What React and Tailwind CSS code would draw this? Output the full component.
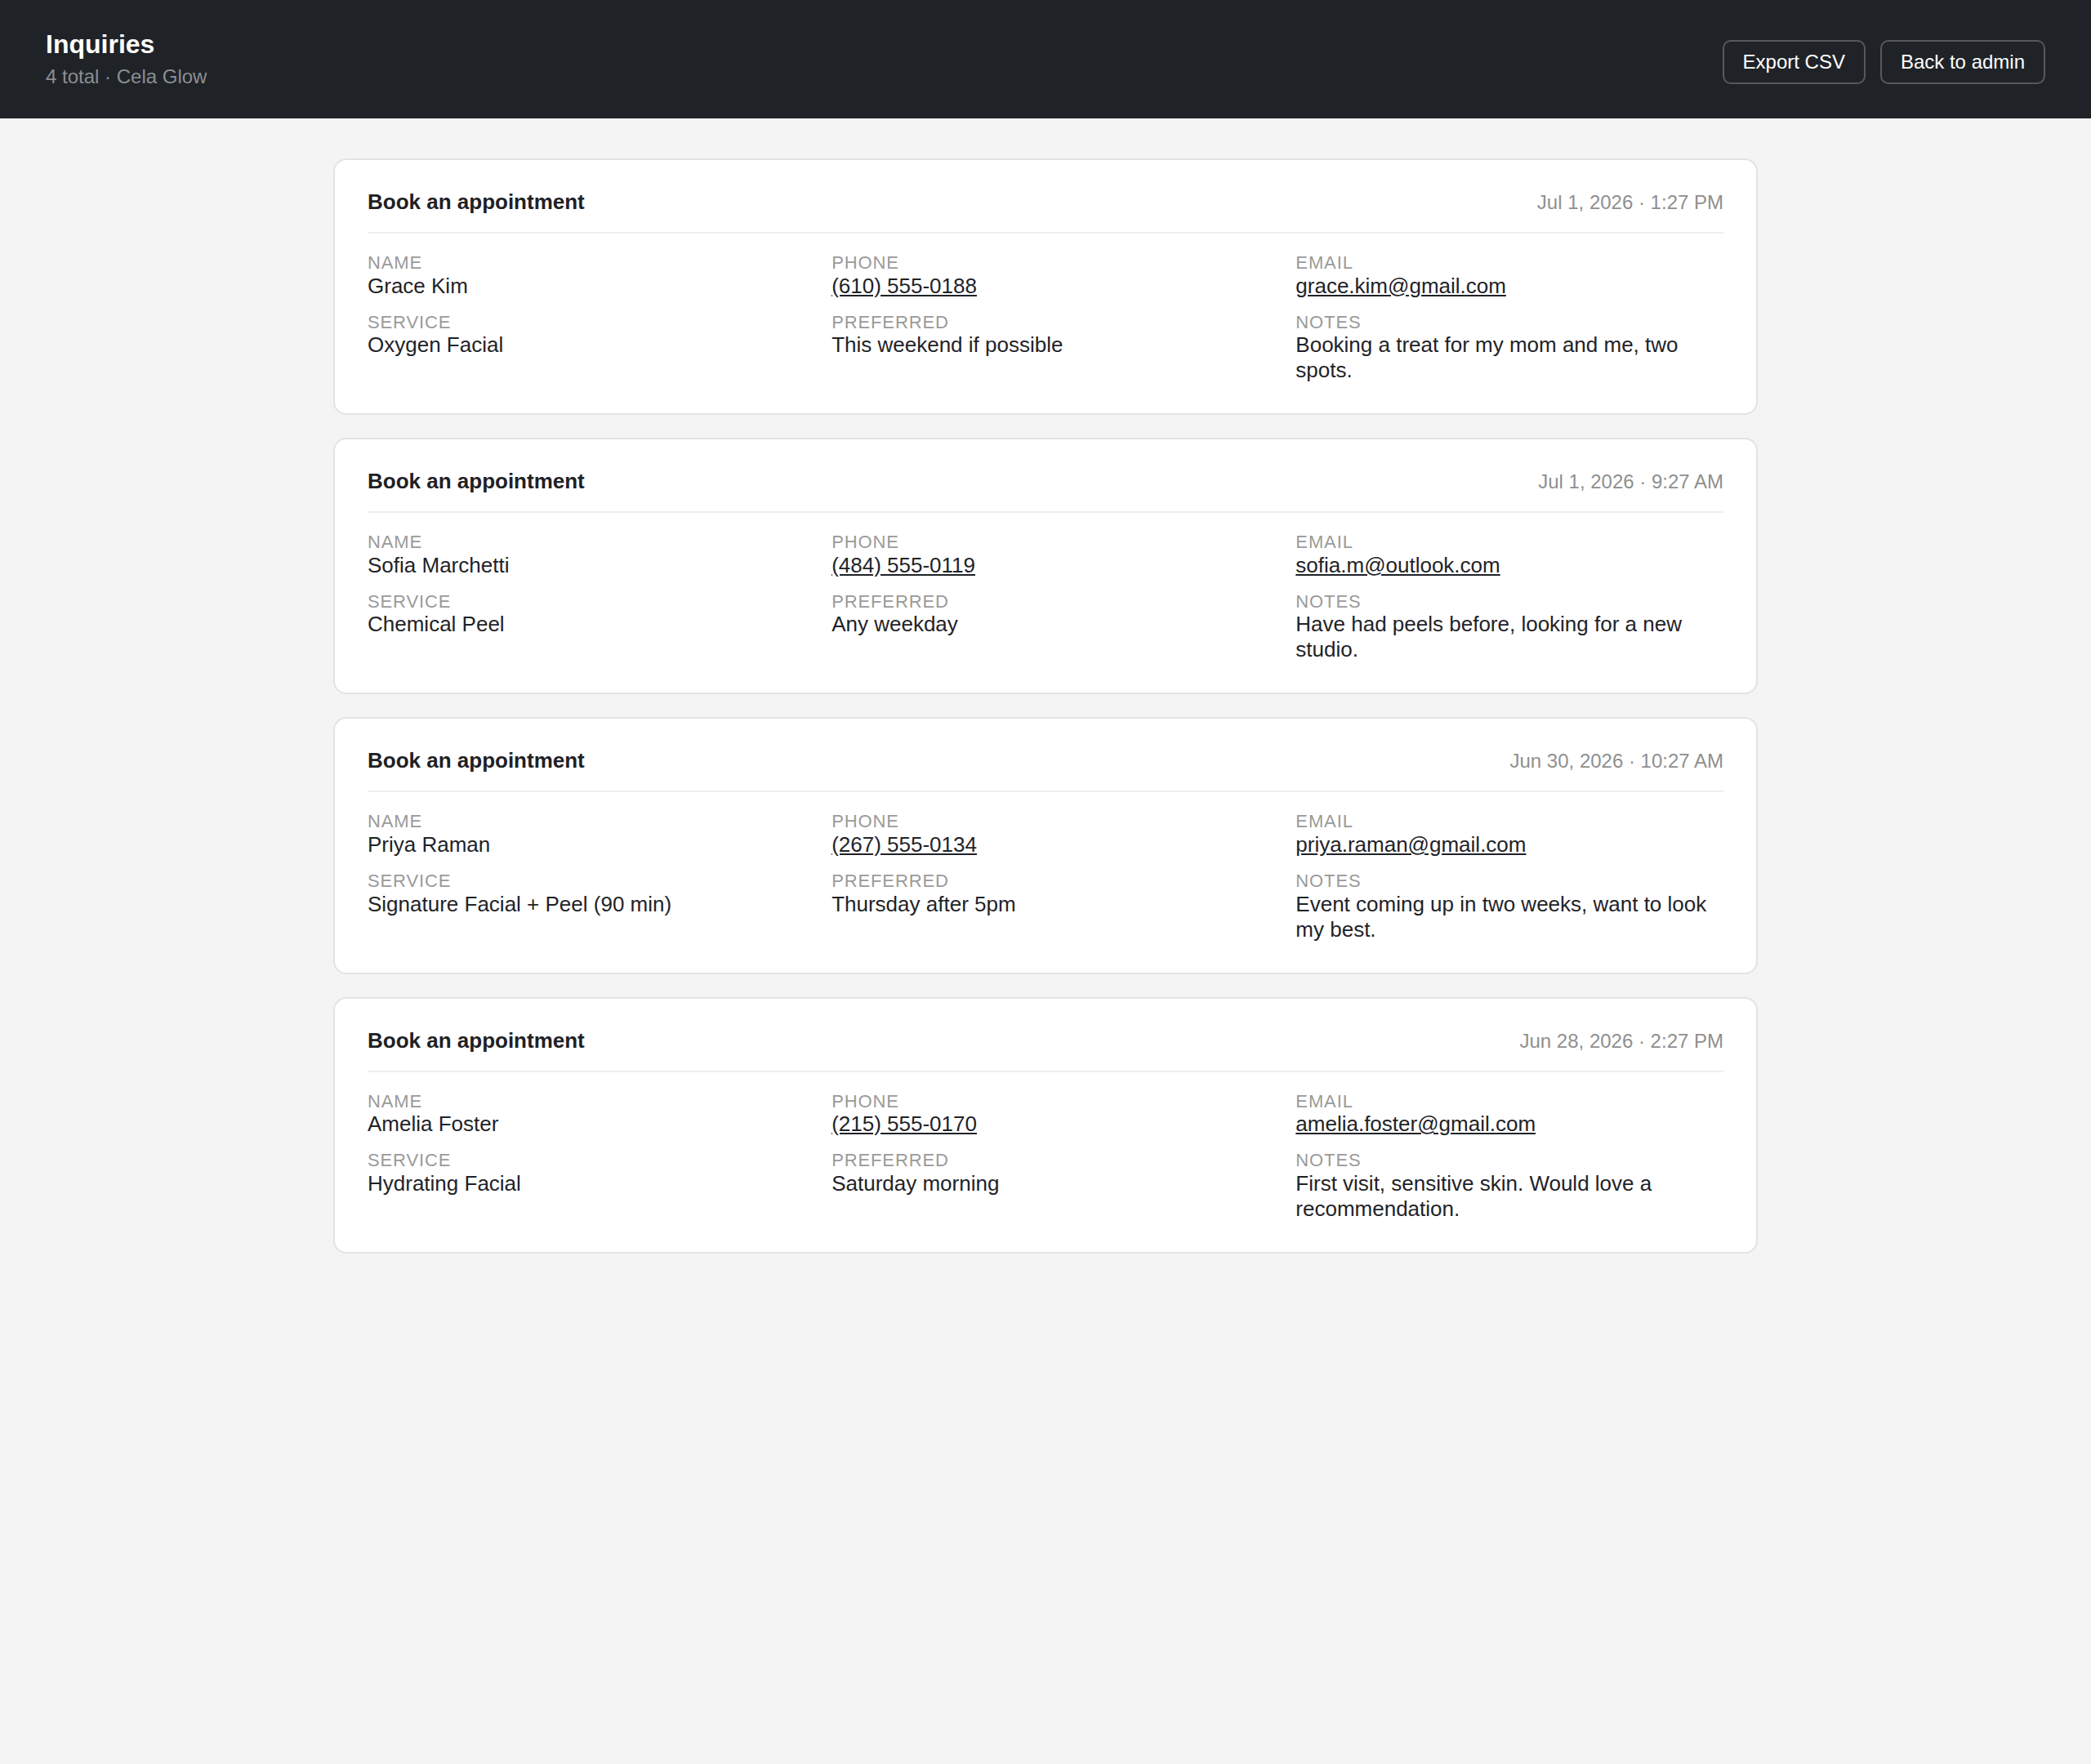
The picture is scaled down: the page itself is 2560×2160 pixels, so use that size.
const inquiries = [
    {
        date: "Jul 1, 2026 · 1:27 PM",
        name: "Grace Kim",
        phone: "(610) 555-0188",
        email: "grace.kim@gmail.com",
        service: "Oxygen Facial",
        preferred: "This weekend if possible",
        notes: "Booking a treat for my mom and me, two spots.",
    },
    {
        date: "Jul 1, 2026 · 9:27 AM",
        name: "Sofia Marchetti",
        phone: "(484) 555-0119",
        email: "sofia.m@outlook.com",
        service: "Chemical Peel",
        preferred: "Any weekday",
        notes: "Have had peels before, looking for a new studio.",
    },
    {
        date: "Jun 30, 2026 · 10:27 AM",
        name: "Priya Raman",
        phone: "(267) 555-0134",
        email: "priya.raman@gmail.com",
        service: "Signature Facial + Peel (90 min)",
        preferred: "Thursday after 5pm",
        notes: "Event coming up in two weeks, want to look my best.",
    },
    {
        date: "Jun 28, 2026 · 2:27 PM",
        name: "Amelia Foster",
        phone: "(215) 555-0170",
        email: "amelia.foster@gmail.com",
        service: "Hydrating Facial",
        preferred: "Saturday morning",
        notes: "First visit, sensitive skin. Would love a recommendation.",
    },
]

function Field({ label, children }) {
    return (
        <div className="flex flex-col">
            <div className="text-[22px] leading-[25.6px] uppercase tracking-[0.04em] text-[#9a9a9a]">
                {label}
            </div>
            <div className="text-[26px] leading-[31px] text-[#1f2328]">
                {children}
            </div>
        </div>
    )
}

function InquiryCard({ item }) {
    return (
        <div className="bg-white border-2 border-[#e3e3e3] rounded-[16px] px-[40px] pt-[36px] pb-[37px]">
            <div className="flex items-baseline justify-between pb-[21px] border-b-2 border-[#efefef]">
                <div className="text-[26px] leading-[31px] font-bold text-[#1f2125]">
                    Book an appointment
                </div>
                <div className="text-[24px] leading-[31px] text-[#8f8f8f]">
                    {item.date}
                </div>
            </div>
            <div className="grid grid-cols-3 gap-x-[44.5px] gap-y-[16px] pt-[23px]">
                <Field label="Name">{item.name}</Field>
                <Field label="Phone">
                    <a className="underline" href="#">{item.phone}</a>
                </Field>
                <Field label="Email">
                    <a className="underline" href="#">{item.email}</a>
                </Field>
                <Field label="Service">{item.service}</Field>
                <Field label="Preferred">{item.preferred}</Field>
                <Field label="Notes">{item.notes}</Field>
            </div>
        </div>
    )
}

export default function App() {
    return (
        <div className="min-h-screen bg-[#f4f4f4] font-['Liberation_Sans',Arial,sans-serif]">
            <header className="h-[145px] bg-[#1f2327] px-[56px] flex items-center justify-between">
                <div className="flex flex-col">
                    <div className="text-[32px] leading-[38px] font-bold text-white">Inquiries</div>
                    <div className="mt-[4.5px] text-[24px] leading-[32px] text-[#8b8e92]">4 total · Cela Glow</div>
                </div>
                <div className="flex gap-[18px] mt-[7px]">
                    <button className="border-2 border-[#55595e] rounded-[10px] px-[23px] py-[11px] text-[24px] leading-[28px] text-white">
                        Export CSV
                    </button>
                    <button className="border-2 border-[#55595e] rounded-[10px] px-[23px] py-[11px] text-[24px] leading-[28px] text-white">
                        Back to admin
                    </button>
                </div>
            </header>
            <main className="w-[1744px] mx-auto pt-[49px] pb-[50px] flex flex-col gap-[28px]">
                {
                    inquiries.map((item) => (
                        <InquiryCard key={item.email} item={item} />
                    ))
                }
            </main>
        </div>
    )
}
